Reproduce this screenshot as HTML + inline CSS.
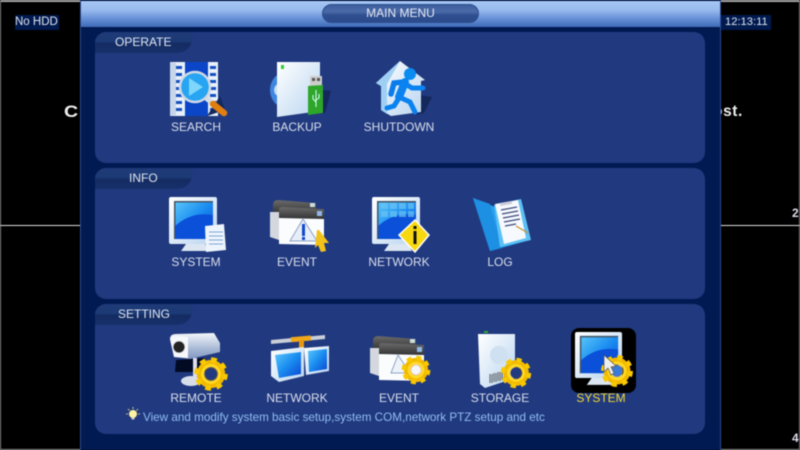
<!DOCTYPE html>
<html><head><meta charset="utf-8">
<style>
html,body{margin:0;padding:0;background:#000;width:800px;height:450px;overflow:hidden}
#r{position:relative;width:800px;height:450px;overflow:hidden;background:#000;font-family:"Liberation Sans",sans-serif;filter:blur(.45px)}
.a{position:absolute}
.p{position:absolute;left:95px;width:610px;background:#21397f;border-radius:11px}
.t{position:absolute;left:95px;width:97px;height:21px;border-radius:11px 0 14px 0;background:linear-gradient(#1f3a78 0,#1c3a76 45%,#142c62 55%,#17306a 100%);color:#dfe4ef;font-size:12px;line-height:21px}
.l{position:absolute;width:100px;text-align:center;color:#d9dfec;font-size:12px;line-height:14px}
svg{position:absolute;left:0;top:0}
</style></head><body><div id="r">
<div class="a" style="left:0;top:0;width:800px;height:2px;background:#a8a8a8"></div>
<div class="a" style="left:0;top:0;width:1px;height:450px;background:#888"></div>
<div class="a" style="left:799px;top:0;width:1px;height:450px;background:#888"></div>
<div class="a" style="left:0;top:225px;width:800px;height:1px;background:#ddd"></div>
<div class="a" style="left:0;top:449px;width:800px;height:1px;background:#999"></div>
<div class="a" style="left:15px;top:15px;width:44px;height:15px;background:#001a4f;color:#dfe4ef;font-size:11.5px;line-height:15px;white-space:nowrap">No HDD</div>
<div class="a" style="left:721px;top:15px;width:50px;height:15px;background:#001a4f;color:#dfe4ef;font-size:11.2px;line-height:15px;white-space:nowrap;text-indent:4px">12:13:11</div>
<div class="a" style="left:64px;top:103px;color:#eee;font-size:17px;font-weight:bold;line-height:18px;transform-origin:0 50%;transform:scaleX(1.15)">C</div>
<div class="a" style="left:713px;top:103px;width:35px;color:#eee;font-size:15.5px;font-weight:bold;line-height:18px;white-space:nowrap;letter-spacing:.6px">ost.</div>
<div class="a" style="left:792px;top:206px;color:#dde;font-size:12px;font-weight:bold;line-height:14px">2</div>
<div class="a" style="left:792px;top:431px;color:#dde;font-size:12px;font-weight:bold;line-height:14px">4</div>

<div class="a" style="left:80px;top:0;width:641px;height:450px;background:#021a52;border-left:1px solid #2c4a90;border-right:1px solid #2c4a90;box-sizing:border-box"></div>
<div class="a" style="left:81px;top:1px;width:639px;height:26px;background:linear-gradient(#a6c6f3 0,#98baee 35%,#6a94d8 65%,#3f6bb8 100%)"></div>
<div class="a" style="left:322px;top:4px;width:157px;height:19px;border-radius:10px;background:linear-gradient(#3d5f9f 0,#4a6aa8 40%,#2f4f90 60%,#2a4a8c 100%);border:1px solid #2c4d8e;box-sizing:border-box;color:#e6eaf3;font-size:12px;line-height:17px;text-align:center">MAIN MENU</div>

<div class="p" style="top:32px;height:131px"></div>
<div class="p" style="top:168px;height:131px"></div>
<div class="p" style="top:304px;height:130px"></div>
<div class="t" style="top:32px;padding-left:20px;width:77px">OPERATE</div>
<div class="t" style="top:168px;padding-left:34px;width:63px">INFO</div>
<div class="t" style="top:304px;padding-left:23px;width:74px">SETTING</div>

<svg width="800" height="450" viewBox="0 0 800 450">
<defs>
<linearGradient id="sc" x1="0" y1="0" x2="1" y2="1"><stop offset="0" stop-color="#5cc8fa"/><stop offset=".5" stop-color="#1a8cf0"/><stop offset="1" stop-color="#0a46d0"/></linearGradient>
<linearGradient id="wh" x1="0" y1="0" x2="1" y2="1"><stop offset="0" stop-color="#fff"/><stop offset="1" stop-color="#b8d4f0"/></linearGradient>
<linearGradient id="tb" x1="0" y1="0" x2="0" y2="1"><stop offset="0" stop-color="#6a6a6a"/><stop offset="1" stop-color="#333"/></linearGradient>
<linearGradient id="cam" x1="0" y1="0" x2="0" y2="1"><stop offset="0" stop-color="#f4f7fb"/><stop offset=".6" stop-color="#a9bad6"/><stop offset="1" stop-color="#7f96bf"/></linearGradient>
<g id="gear">
<circle r="10.5" fill="none" stroke="#f2b800" stroke-width="6"/>
<circle r="13.5" fill="none" stroke="#f8c800" stroke-width="5" stroke-dasharray="5.3 5.3"/>
<circle r="8" fill="none" stroke="#ffd820" stroke-width="3"/>
<circle r="5.5" fill="none" stroke="#d98000" stroke-width="1"/>
</g>
<g id="mon">
<path d="M25 47h-8l-5 7 28 0-4-7z" fill="#dbe6f2"/>
<rect x="0" y="0" width="48" height="47" rx="2" fill="url(#wh)"/>
<rect x="5" y="4" width="39" height="38" fill="url(#sc)"/>
<path d="M5 30Q22 14 44 18V42H5z" fill="#0a50d8"/>
<path d="M5 4h39v1.500H6.500v36.500H5z" fill="#456"/>
</g>
<g id="win">
<path d="M3 5Q3 0 8 0L46 3V14L3 12z" fill="url(#tb)"/>
<path d="M0 12H9V40L0 37z" fill="#d4d8de"/>
<rect x="40" y="3" width="5" height="4" fill="#cdd"/>
<path d="M9 10Q9 7 12 7L54 9V19L9 18z" fill="url(#tb)"/>
<rect x="47" y="11" width="5" height="5" fill="#8fb7e8"/>
<path d="M9 18L54 19V45L9 44z" fill="#fbfcfe"/>
</g>
</defs>

<!-- SEARCH -->
<path d="M170 62l48 0v54l-48 0z" fill="#e8f0fa"/><path d="M170 62l6 1v52l-6 1z" fill="#c7d6ea"/>
<rect x="185" y="62" width="23" height="54" fill="#0b46c8"/>
<g fill="#1550c0"><rect x="176" y="66" width="6" height="3"/><rect x="176" y="73" width="6" height="3"/><rect x="176" y="80" width="6" height="3"/><rect x="176" y="87" width="6" height="3"/><rect x="176" y="94" width="6" height="3"/><rect x="176" y="101" width="6" height="3"/><rect x="176" y="108" width="6" height="3"/>
<rect x="210" y="66" width="6" height="3"/><rect x="210" y="73" width="6" height="3"/><rect x="210" y="80" width="6" height="3"/><rect x="210" y="87" width="6" height="3"/><rect x="210" y="94" width="6" height="3"/><rect x="210" y="101" width="6" height="3"/><rect x="210" y="108" width="6" height="3"/></g>
<path d="M220 96l5 14-18 6z" fill="#14285c"/>
<path d="M206 98L216 106" stroke="#d9dde4" stroke-width="5"/><path d="M213 104L224 113" stroke="#e07f10" stroke-width="6.500" stroke-linecap="round"/>
<circle cx="195" cy="87" r="15" fill="#27a4f2" stroke="#cfd8e6" stroke-width="2.500"/>
<path d="M189 78l14 9-14 9z" fill="#7fd6fb"/>

<!-- BACKUP -->
<ellipse cx="286" cy="90" rx="16" ry="18" fill="#3f86e0"/><ellipse cx="279" cy="90" rx="5" ry="6" fill="#c8ddf4"/>
<path d="M277 62l43 0v49l-43 6z" fill="url(#wh)"/>
<rect x="281" y="65" width="3" height="4" fill="#3c3"/>
<path d="M322 90l9 1-6 22-8 1z" fill="#14285c"/>
<rect x="310" y="76" width="12" height="10" fill="#ccc"/>
<rect x="312" y="78" width="3" height="3" fill="#555"/><rect x="317" y="78" width="3" height="3" fill="#555"/>
<path d="M308 86L323 85V113L308 115z" fill="#2da62a"/>
<path d="M316 90v17M313 95v4l3 3M319 94v4l-3 2" stroke="#dff" stroke-width="1" fill="none"/>

<!-- SHUTDOWN -->
<path d="M418 95l14 2-8 16-8 2z" fill="#14285c"/>
<path d="M400 61L425 80 421 81V112L391 116 381 110V86L376 83z" fill="url(#wh)"/>
<path d="M400 61L376 83 381 86V110L387 114V84z" fill="#9fd0f4"/>
<circle cx="410" cy="74" r="6" fill="#0a8cf0"/>
<path d="M404 82L394 83 391 94" fill="none" stroke="#0a7cec" stroke-width="5.500" stroke-linecap="round"/>
<path d="M405 82L399 97" fill="none" stroke="#0a82f0" stroke-width="8" stroke-linecap="round"/>
<path d="M399 97L410 102 415 112M404 83L412 88 423 88M399 98L394 106 387 108" fill="none" stroke="#0a82f0" stroke-width="5" stroke-linecap="round"/>

<!-- INFO SYSTEM -->
<use href="#mon" x="169" y="197"/>
<path d="M205 226l19-2 2 26-20 2z" fill="#eef4fb"/>
<g stroke="#7fa7d8" stroke-width="1"><path d="M209 232h14M209 236h14M209 240h14M209 244h14"/></g>

<!-- INFO EVENT -->
<use href="#win" x="270" y="200"/>
<path d="M303 219L290 241 317 241z" fill="#e6eef8" stroke="#8ea4c6" stroke-width="1"/>
<rect x="302" y="224" width="3" height="12" fill="#1248d0"/><rect x="302" y="237" width="3" height="3" fill="#1248d0"/>
<path d="M317 230l2 0 10 13-5 0 2 8-5 1-3-7-3 3z" fill="#f3c21a"/>

<!-- INFO NETWORK -->
<use href="#mon" x="372" y="197"/>
<g fill="#6cc4f4" opacity=".7"><rect x="381" y="203" width="7" height="6"/><rect x="390" y="203" width="7" height="6"/><rect x="399" y="203" width="7" height="6"/><rect x="408" y="203" width="6" height="6"/><rect x="381" y="211" width="7" height="6"/><rect x="390" y="211" width="7" height="6"/><rect x="399" y="211" width="7" height="6"/><rect x="408" y="211" width="6" height="6"/></g>
<path d="M415 220L429 235 415 252 399 235z" fill="#f8d810" stroke="#fff" stroke-width="1.500"/>
<rect x="413.500" y="231" width="3" height="13" fill="#111"/><rect x="413.500" y="226" width="3" height="3" fill="#111"/>

<!-- INFO LOG -->
<path d="M473 198L495 207 530 240 490 251z" fill="#2aa0ee"/>
<path d="M473 198L490 204 502 248 490 251z" fill="#1e90e4"/>
<path d="M494 205L521 199 531 240 500 247z" fill="#5cc0f4"/>
<path d="M495 204L518 200 526 238 504 244z" fill="#f6f9fd"/>
<rect x="500" y="202" width="12" height="3" fill="#ccd" transform="rotate(-10 506 203)"/>
<g stroke="#3a4a7a" stroke-width="1.200"><path d="M501 210l16-3M502 214l16-3M503 218l16-3M504 222l16-3M505 226l11-2"/></g>
<path d="M516 226L528 233" stroke="#c8902a" stroke-width="1.200"/>

<!-- REMOTE -->
<path d="M176 360L205 358 207 372 175 372z" fill="#020a24"/>
<path d="M170 339Q170 334 176 334L214 333 220 343 220 352 190 359 174 357z" fill="url(#cam)"/>
<path d="M170 339Q170 336 176 336L188 337 188 358 174 357z" fill="#f6f8fb"/>
<circle cx="179" cy="347" r="6" fill="#222" stroke="#dfe4ea" stroke-width="1"/>
<rect x="193" y="358" width="4" height="22" fill="#dde"/>
<ellipse cx="191" cy="381" rx="10" ry="5" fill="#d7deea"/>
<g transform="translate(211 374) scale(1.05)"><use href="#gear"/></g>
<circle cx="211" cy="374" r="6" fill="#21397f"/>

<!-- NETWORK (setting) -->
<path d="M271 340L325 335 325 339 271 344z" fill="#c9cfd8"/>
<rect x="291" y="336.500" width="20" height="5" fill="#f0a818" transform="rotate(-5 300 340)"/>
<rect x="299" y="340" width="5" height="10" fill="#e89810"/>
<path d="M271 351L304 347 304 376 279 382 271 376z" fill="url(#wh)"/>
<path d="M304 348L329 346 329 371 306 375z" fill="url(#wh)"/>
<path d="M275 355L301 352 301 374 279 378z" fill="url(#sc)"/>
<path d="M308 351L327 349 327 369 309 372z" fill="url(#sc)"/>

<!-- EVENT (setting) -->
<use href="#win" x="370" y="336"/>
<path d="M398 355L391 373 410 373z" fill="#eef3fa" stroke="#8ea4c6"/>
<g transform="translate(416 370) scale(.9)"><use href="#gear"/></g>
<circle cx="416" cy="370" r="5" fill="#f4f6fa"/>

<!-- STORAGE -->
<path d="M478 334L515 334 515 378 485 388 480 384z" fill="url(#wh)"/>
<rect x="484" y="331" width="4" height="2" fill="#3a3"/>
<circle cx="499" cy="355" r="9" fill="#cfe0f0"/>
<g stroke="#333" stroke-width=".8"><path d="M490 374v9M492 374v9M494 373v9M496 373v9M498 372v9M500 372v9M502 371v9M504 371v8"/></g>
<g transform="translate(516 373) scale(.95)"><use href="#gear"/></g>
<circle cx="516" cy="373" r="5.500" fill="#21397f"/>

<!-- SYSTEM selected -->
<rect x="571" y="328" width="65" height="65" rx="8" fill="#000"/>
<g transform="translate(575 332) scale(.98)"><use href="#mon"/></g>
<use href="#gear" x="617" y="371"/>
<circle cx="617" cy="371" r="5.500" fill="#3a7ad8"/>
<path d="M604 355V372L608 368 611 375 614 373 611 367 616 366z" fill="#eee" stroke="#444" stroke-width=".6"/>

<!-- bulb -->
<circle cx="133" cy="414" r="4" fill="#fff2a0"/>
<g stroke="#f4e58a" stroke-width=".8"><path d="M133 407v2M126 414h2M138 414h2M128 409l1.500 1.500M138 409l-1.500 1.500"/></g>
<rect x="131.500" y="417.500" width="3" height="2" fill="#ccc"/>
</svg>

<div class="l" style="left:146px;top:120px">SEARCH</div>
<div class="l" style="left:247px;top:120px">BACKUP</div>
<div class="l" style="left:349px;top:120px">SHUTDOWN</div>
<div class="l" style="left:146px;top:255px">SYSTEM</div>
<div class="l" style="left:247px;top:255px">EVENT</div>
<div class="l" style="left:349px;top:255px">NETWORK</div>
<div class="l" style="left:450px;top:255px">LOG</div>
<div class="l" style="left:146px;top:391px">REMOTE</div>
<div class="l" style="left:247px;top:391px">NETWORK</div>
<div class="l" style="left:349px;top:391px">EVENT</div>
<div class="l" style="left:450px;top:391px">STORAGE</div>
<div class="l" style="left:551px;top:391px;color:#f0d930">SYSTEM</div>
<div class="a" style="left:143px;top:411px;color:#8fbdf0;font-size:11.7px;line-height:14px;white-space:nowrap">View and modify system basic setup,system COM,network PTZ setup and etc</div>
</div></body></html>
